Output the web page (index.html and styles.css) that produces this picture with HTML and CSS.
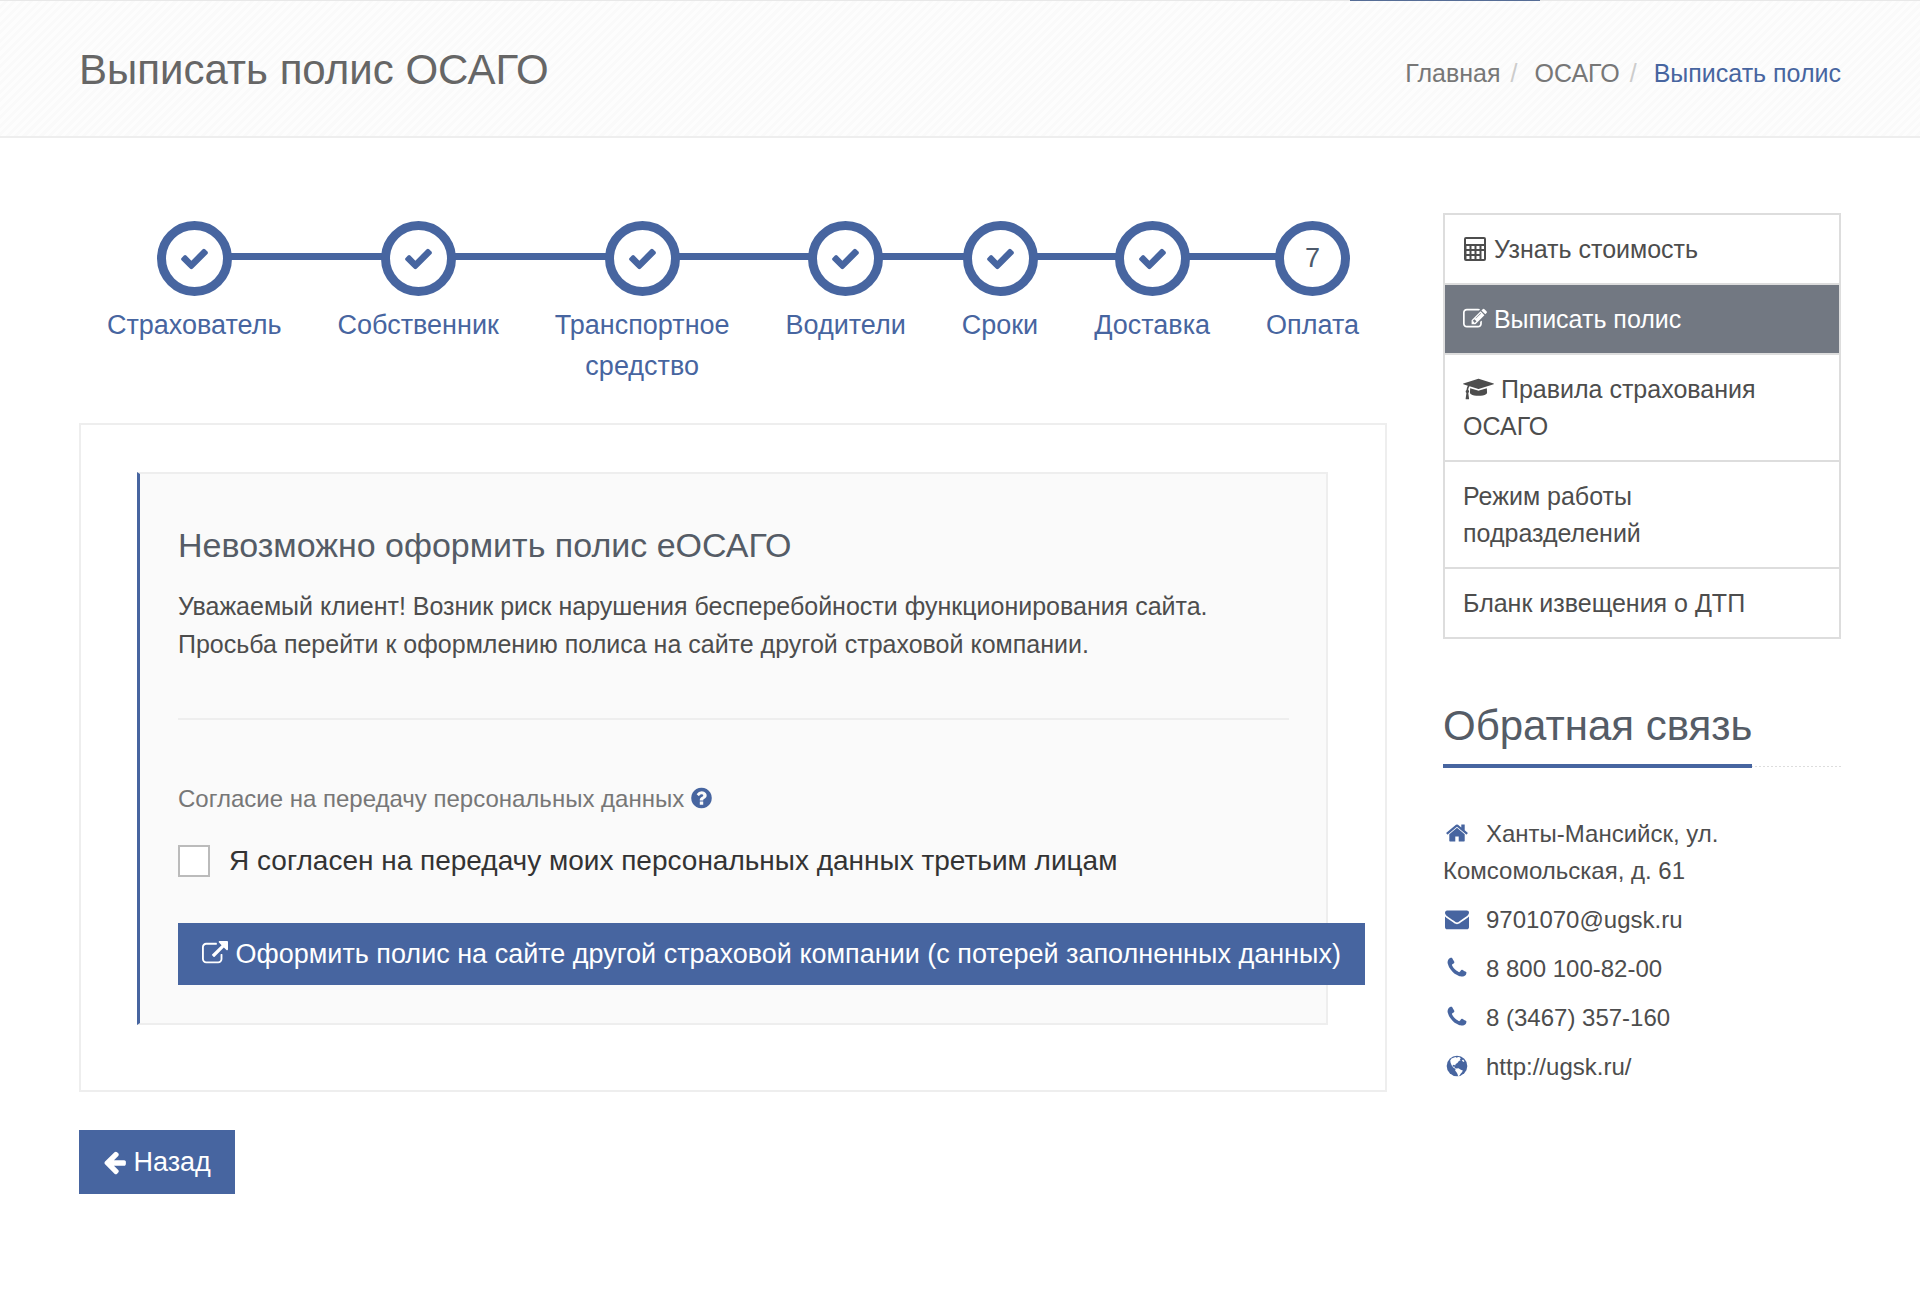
FILE: index.html
```html
<!DOCTYPE html>
<html lang="ru">
<head>
<meta charset="utf-8">
<meta name="viewport" content="width=device-width, initial-scale=1">
<title>Выписать полис ОСАГО</title>
<link rel="stylesheet" href="styles.css">
</head>
<body>
<svg class="sprite" aria-hidden="true">
  <symbol id="check" viewBox="0 0 1792 1792"><path d="M1671 566q0 40-28 68l-724 724-136 136q-28 28-68 28t-68-28l-136-136-362-362q-28-28-28-68t28-68l136-136q28-28 68-28t68 28l294 295 656-657q28-28 68-28t68 28l136 136q28 28 28 68z"/></symbol>
  <symbol id="phone" viewBox="0 0 1792 1792"><path d="M1600 1240q0 27-10 70.5t-21 68.500q-21 50-122 106-94 51-186 51-27 0-53-3.500t-57.500-12.500-47-14.500-55.500-20.500-49-18q-98-35-175-83-127-79-264-216t-216-264q-48-77-83-175-3-9-18-49t-20.500-55.500-14.500-47-12.500-57.500-3.500-53q0-92 51-186 56-101 106-122 25-11 68.500-21t70.500-10q14 0 21 3 18 6 53 76 11 19 30 54t35 63.500 31 53.500q3 4 17.500 25t21.500 35.500 7 28.500q0 20-28.500 50t-62 55-62 53-28.500 46q0 9 5 22.500t8.500 20.500 14 24 11.500 19q76 137 174 235t235 174q2 1 19 11.500t24 14 20.500 8.500 22.500 5q18 0 46-28.500t53-62 55-62 50-28.500q14 0 28.500 7t35.500 21.500 25 17.500q25 15 53.500 31t63.500 35 54 30q70 35 76 53 3 7 3 21z"/></symbol>
</svg>

<header class="page-head">
  <span class="nav-marker"></span>
  <h1 class="page-title">Выписать полис ОСАГО</h1>
  <nav aria-label="Навигация">
    <ol class="crumbs">
      <li><a href="#">Главная</a></li>
      <li><a href="#">ОСАГО</a></li>
      <li class="current">Выписать полис</li>
    </ol>
  </nav>
</header>

<div class="layout">
  <main class="content">
    <ol class="steps">
      <li class="step"><span class="dot"><svg class="tick"><use href="#check"/></svg></span><span>Страхователь</span></li>
      <li class="step"><span class="dot"><svg class="tick"><use href="#check"/></svg></span><span>Собственник</span></li>
      <li class="step"><span class="dot"><svg class="tick"><use href="#check"/></svg></span><span>Транспортное<br>средство</span></li>
      <li class="step"><span class="dot"><svg class="tick"><use href="#check"/></svg></span><span>Водители</span></li>
      <li class="step"><span class="dot"><svg class="tick"><use href="#check"/></svg></span><span>Сроки</span></li>
      <li class="step"><span class="dot"><svg class="tick"><use href="#check"/></svg></span><span>Доставка</span></li>
      <li class="step"><span class="dot">7</span><span>Оплата</span></li>
    </ol>

    <section class="panel">
      <div class="notice">
        <h2 class="notice-title">Невозможно оформить полис еОСАГО</h2>
        <p class="notice-text">Уважаемый клиент! Возник риск нарушения бесперебойности функционирования сайта.<br>Просьба перейти к оформлению полиса на сайте другой страховой компании.</p>
        <hr class="rule">
        <p class="field-label">Согласие на передачу персональных данных
          <svg class="icon help" viewBox="128 0 1536 1792"><path d="M1024 1376v-192q0-14-9-23t-23-9h-192q-14 0-23 9t-9 23v192q0 14 9 23t23 9h192q14 0 23-9t9-23zm256-672q0-88-55.500-163t-138.500-116-170-41q-243 0-371 213-15 24 8 42l132 100q7 6 19 6 16 0 25-12 53-68 86-92 34-24 86-24 48 0 85.500 26t37.500 59q0 38-20 61t-68 45q-63 28-115.500 86.500t-52.500 125.500v36q0 14 9 23t23 9h192q14 0 23-9t9-23q0-19 21.500-49.500t54.500-49.500q32-18 49-28.500t46-35 44.500-48 28-60.500 12.500-81zm384 192q0 209-103 385.500t-279.500 279.500-385.500 103-385.500-103-279.500-279.500-103-385.500 103-385.500 279.500-279.500 385.500-103 385.500 103 279.500 279.500 103 385.500z"/></svg></p>
        <label class="consent"><input class="box" type="checkbox"><span>Я согласен на передачу моих персональных данных третьим лицам</span></label>
        <button class="btn" type="button"><svg class="icon" viewBox="0 0 1792 1792"><path d="M1408 928v320q0 119-84.500 203.500t-203.500 84.500h-832q-119 0-203.500-84.500t-84.500-203.500v-832q0-119 84.500-203.500t203.500-84.500h704q14 0 23 9t9 23v64q0 14-9 23t-23 9h-704q-66 0-113 47t-47 113v832q0 66 47 113t113 47h832q66 0 113-47t47-113v-320q0-14 9-23t23-9h64q14 0 23 9t9 23zm384-864v512q0 26-19 45t-45 19-45-19l-176-176-652 652q-10 10-23 10t-23-10l-114-114q-10-10-10-23t10-23l652-652-176-176q-19-19-19-45t19-45 45-19h512q26 0 45 19t19 45z"/></svg> Оформить полис на сайте другой страховой компании (с потерей заполненных данных)</button>
      </div>
    </section>

    <button class="btn back" type="button"><svg class="icon narrow" viewBox="96 0 1568 1792"><path d="M1664 896v128q0 53-32.500 90.500t-84.500 37.500h-704l293 294q38 36 38 90t-38 90l-75 76q-37 37-90 37-52 0-91-37l-651-652q-37-37-37-90 0-52 37-91l651-650q38-38 91-38 52 0 90 38l75 74q38 38 38 91t-38 91l-293 293h704q52 0 84.500 37.500t32.500 90.500z"/></svg> Назад</button>
  </main>

  <aside class="side">
    <ul class="menu">
      <li><a href="#"><svg class="icon" viewBox="0 0 24 24"><path fill-rule="evenodd" d="M3 0h18a2 2 0 0 1 2 2v20a2 2 0 0 1-2 2H3a2 2 0 0 1-2-2V2a2 2 0 0 1 2-2zm0 2v5h18V2zM3.500 9v3h3V9zm5 0v3h3V9zm5 0v3h3V9zm5 0v3h2.500V9zM3.500 14v3h3v-3zm5 0v3h3v-3zm5 0v3h3v-3zm5 0v8h2.500v-8zM3.500 19v3h3v-3zm5 0v3h3v-3zm5 0v3h3v-3z"/></svg> Узнать стоимость</a></li>
      <li><a class="active" href="#"><svg class="icon" viewBox="0 0 1792 1792"><path d="M888 1184l116-116-152-152-116 116v56h96v96h56zm440-720q-16-16-33 1l-350 350q-17 17-1 33t33-1l350-350q17-17 1-33zm80 594v190q0 119-84.500 203.500t-203.500 84.500h-832q-119 0-203.500-84.500t-84.500-203.500v-832q0-119 84.500-203.500t203.500-84.500h832q63 0 117 25 15 7 18 23 3 17-9 29l-49 49q-14 14-32 8-23-6-45-6h-832q-66 0-113 47t-47 113v832q0 66 47 113t113 47h832q66 0 113-47t47-113v-126q0-13 9-22l64-64q15-15 35-7t20 29zm-96-738l288 288-672 672h-288v-288zm444 132l-92 92-288-288 92-92q28-28 68-28t68 28l152 152q28 28 28 68t-28 68z"/></svg> Выписать полис</a></li>
      <li><a href="#"><svg class="icon wide" viewBox="0 0 2304 1792"><path d="M1774 836l18 316q4 69-82 128t-235 93.500-323 34.500-323-34.500-235-93.500-82-128l18-316 574 181q22 7 48 7t48-7zM2304 512q0 23-22 31l-1120 352q-4 1-10 1t-10-1l-652-206q-43 34-71 111.500t-34 178.500q63 36 63 109 0 69-58 107l58 433q2 14-8 25-9 11-24 11h-192q-15 0-24-11-10-11-8-25l58-433q-58-38-58-107 0-73 65-111 11-207 98-330l-333-104q-22-8-22-31t22-31l1120-352q4-1 10-1t10 1l1120 352q22 8 22 31z"/></svg> Правила страхования ОСАГО</a></li>
      <li><a href="#">Режим работы<br>подразделений</a></li>
      <li><a href="#">Бланк извещения о ДТП</a></li>
    </ul>

    <div class="side-head"><h2 class="side-title">Обратная связь</h2></div>
    <ul class="contacts">
      <li><svg class="icon" viewBox="0 0 1792 1792"><path d="M1472 992v480q0 26-19 45t-45 19h-384v-384h-256v384h-384q-26 0-45-19t-19-45v-480q0-1 .5-3t.5-3l575-474 575 474q1 2 1 6zm223-69l-62 74q-8 9-21 11h-3q-13 0-21-7l-692-577-692 577q-12 8-24 7-13-2-21-11l-62-74q-8-10-7-23.500t11-21.500l719-599q32-26 76-26t76 26l244 204v-195q0-14 9-23t23-9h192q14 0 23 9t9 23v408l219 182q10 8 11 21.500t-7 23.500z"/></svg>Ханты-Мансийск, ул.<br>Комсомольская, д. 61</li>
      <li><svg class="icon" viewBox="0 0 1792 1792"><path d="M1792 710v794q0 66-47 113t-113 47h-1472q-66 0-113-47t-47-113v-794q44 49 101 87 362 246 497 345 57 42 92.500 65.500t94.500 48 110 24.500h2q51 0 110-24.500t94.500-48 92.500-65.500q170-123 498-345 57-39 100-87zm0-294q0 79-49 151t-122 123q-376 261-468 325-10 7-42.500 31t-54 38.500-52 32.500-57.500 27-50 9h-2q-23 0-50-9t-57.500-27-52-32.500-54-38.500-42.500-31q-91-64-262-182.500t-205-142.500q-62-42-117-115.500t-55-136.500q0-78 41.500-130t118.500-52h1472q65 0 112.500 47t47.500 113z"/></svg><a href="#">9701070@ugsk.ru</a></li>
      <li><svg class="icon"><use href="#phone"/></svg>8 800 100-82-00</li>
      <li><svg class="icon"><use href="#phone"/></svg>8 (3467) 357-160</li>
      <li><svg class="icon" viewBox="0 0 24 24"><circle cx="12" cy="12" r="10.300"/><path fill="#fff" d="M8.500 3.700l2-.8 1.200.9 1.400-.9 1.700.4 1 1.200-1 .8.800 1-1.700.6-1.500 2.200-1.700.9-.5 1.600-1.300-.9-1.300.5.400 1.500 1.400-.2.400 1.600 1.300.5 2.400-.3 2.300 1.500 1.900.6-.5 1.600-1.600 1.700-1 1.900-1.500.7-.6-2.200-1-1.900-1.400-1.600.5-1.600-2.400-1.400-1.600-2.300-1-2.500-.4-2.400 1.300-1.800zM16.800 6l1.500-.3 1.200 1.600-1.400.7zM16 16.500l1.500-.6-.4 1.500z"/></svg><a href="#">http://ugsk.ru/</a></li>
    </ul>
  </aside>
</div>
</body>
</html>
```
FILE: styles.css
```css
:root {
  --blue: #4765a0;
  --text: #4d4d4d;
  --heading: #555c66;
  --line: #eeeeee;
}

* { box-sizing: border-box; }

body {
  margin: 0;
  background: #fff;
  color: var(--text);
  font: 24px/37px "Liberation Sans", Arial, sans-serif;
}

a { color: inherit; text-decoration: none; }
h1, h2, p, ul, ol { margin: 0; padding: 0; font-weight: normal; }
ul, ol { list-style: none; }

.sprite { display: none; }

.icon {
  width: 24px;
  height: 24px;
  fill: currentColor;
  vertical-align: -3px;
}

/* Page header */
.page-head {
  position: relative;
  display: flex;
  align-items: center;
  justify-content: space-between;
  padding: 36px 79px 34px;
  border-top: 1px solid #e8e8e8;
  border-bottom: 2px solid var(--line);
  background: repeating-linear-gradient(135deg, #fdfdfd 0 3px, #fafafa 3px 6px);
}

.nav-marker {
  position: absolute;
  top: -1px;
  right: 380px;
  width: 190px;
  height: 1px;
  background: #566d96;
}

.page-title {
  color: #666;
  font-size: 42px;
  line-height: 65px;
}

.crumbs {
  display: flex;
  padding-top: 8px;
  color: #777;
  font-size: 25px;
}

.crumbs li + li::before {
  content: "/";
  padding: 0 17px 0 10px;
  color: #ccc;
}

.crumbs .current { color: var(--blue); }

/* Columns */
.layout {
  display: flex;
  align-items: flex-start;
  gap: 56px;
  padding: 75px 79px 100px;
}

.content { flex: 1; min-width: 0; }
.side { flex: 0 0 398px; }

/* Progress steps */
.steps {
  display: flex;
  margin: 8px 0 36px;
}

.step {
  position: relative;
  display: flex;
  flex: 1 1 auto;
  flex-direction: column;
  align-items: center;
  gap: 9px;
  color: var(--blue);
  font-size: 27px;
  line-height: 41px;
  text-align: center;
}

.step::before {
  content: "";
  position: absolute;
  top: 32px;
  left: 0;
  width: 100%;
  height: 7px;
  background: var(--blue);
}

.step:first-child::before { left: 50%; width: 50%; }
.step:last-child::before { width: 50%; }

.dot {
  position: relative;
  display: flex;
  align-items: center;
  justify-content: center;
  width: 75px;
  height: 75px;
  border: 9px solid var(--blue);
  border-radius: 50%;
  background: #fff;
  color: #4d5a6b;
}

.tick {
  width: 31px;
  height: 31px;
  fill: var(--blue);
}

/* Notice */
.panel {
  padding: 47px 57px 65px 56px;
  border: 2px solid var(--line);
}

.notice {
  padding: 48px 37px 38px 38px;
  border: 2px solid var(--line);
  border-left: 3px solid var(--blue);
  background: #fafafa;
}

.notice-title {
  margin-bottom: 19px;
  color: var(--heading);
  font-size: 34px;
  line-height: 46px;
}

.notice-text {
  font-size: 25px;
  line-height: 38px;
  white-space: nowrap;
}

.rule {
  margin: 55px 0 60px;
  border: 0;
  border-top: 2px solid var(--line);
}

.field-label { color: #777; }
.help { width: 21px; color: var(--blue); }

.consent {
  display: flex;
  align-items: center;
  gap: 19px;
  margin: 25px 0 44px;
  color: #333;
  font-size: 28px;
  white-space: nowrap;
}

.box {
  appearance: none;
  flex: none;
  width: 32px;
  height: 32px;
  margin: 0;
  border: 2px solid #bbb;
  background: #fff;
}

.btn {
  display: block;
  padding: 12px 24px;
  border: 0;
  background: var(--blue);
  color: #fff;
  font: 27px/38px "Liberation Sans", Arial, sans-serif;
  white-space: nowrap;
}

.btn .icon {
  width: 26px;
  height: 26px;
  vertical-align: -4px;
}

.btn .narrow { width: 23px; }

.back {
  margin-top: 38px;
  line-height: 40px;
}

/* Sidebar */
.menu {
  border: 2px solid #ddd;
  font-size: 25px;
}

.menu li + li { border-top: 2px solid #ddd; }

.menu a {
  display: block;
  padding: 16px 18px 15px;
}

.menu .active { background: #727882; color: #fff; }
.menu .wide { width: 31px; }

.side-head {
  display: flex;
  margin: 59px 0 47px;
  background: repeating-linear-gradient(90deg, #ddd 0 2px, #fff 2px 4px) 0 calc(100% - 1px) / 100% 1px no-repeat;
}

.side-title {
  padding-bottom: 10px;
  border-bottom: 4px solid var(--blue);
  color: var(--heading);
  font-size: 42px;
  line-height: 56px;
}

.contacts {
  display: flex;
  flex-direction: column;
  gap: 12px;
}

.contacts .icon {
  margin: 0 17px 0 2px;
  color: var(--blue);
}
```
